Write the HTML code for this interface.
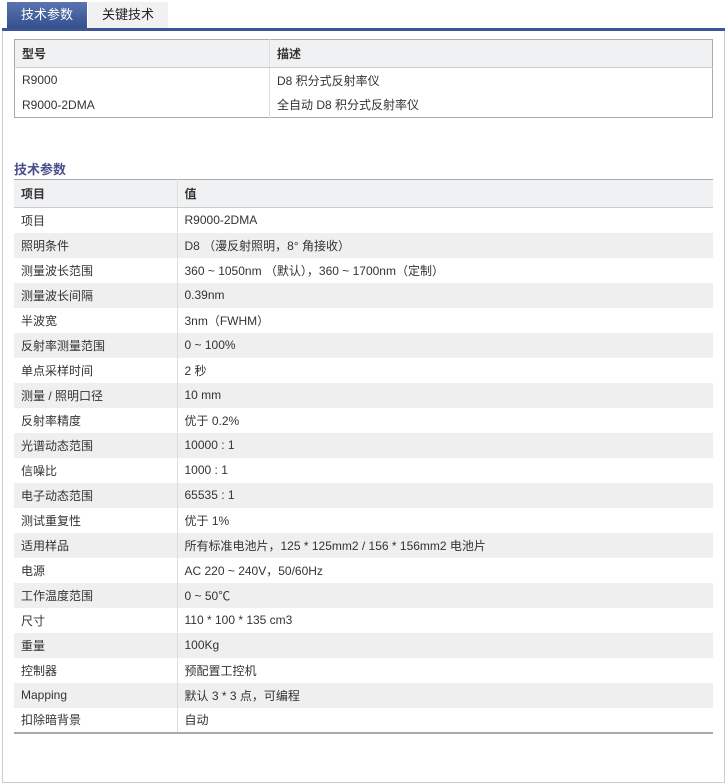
<!DOCTYPE html>
<html><head><meta charset="utf-8"><style>
*{margin:0;padding:0;box-sizing:border-box}
body{width:726px;height:784px;background:#fff;font-family:"Liberation Sans","Noto Sans CJK SC",sans-serif;font-size:12px;color:#333;position:relative;overflow:hidden}
.tab{position:absolute;top:2px;height:26px;width:80px;text-align:center;line-height:26px;font-size:13px}
.t1{left:7px;background:linear-gradient(#5b74b0,#34508f);color:#fff}
.t2{left:88px;background:#f1f1f1;color:#222}
.bar{position:absolute;left:2px;top:28px;width:723px;height:3px;background:#3b5595}
.box{position:absolute;left:2px;top:31px;width:723px;height:752px;border:1px solid #ccc;border-top:none}
table{border-collapse:collapse;position:absolute;left:14px;width:699px}
td{height:25px;padding-left:7px;vertical-align:middle}
.tb1{top:39px;border:1px solid #aaa}
.tb1 tr.h td{background:#f0f1f3;height:28px;border-bottom:1px solid #ccc;font-weight:bold}
.tb1 td.c1{width:255px;border-right:1px solid #ddd}
.tb2{top:179px;border-top:1px solid #aaa;border-bottom:2px solid #aaa}
.tb2 tr.h td{background:#f0f1f3;height:28px;border-bottom:1px solid #ccc;font-weight:bold}
.tb2 td.c1{width:163px;border-right:1px solid #ddd}
.tb2 tr.g td{background:#efefef}
.title{position:absolute;left:14px;top:159px;font-size:13px;font-weight:bold;color:#4c4f8f}
</style></head><body>
<div class="tab t1">技术参数</div><div class="tab t2">关键技术</div>
<div class="bar"></div><div class="box"></div>
<table class="tb1">
<tr class="h"><td class="c1">型号</td><td>描述</td></tr>
<tr><td class="c1">R9000</td><td>D8 积分式反射率仪</td></tr>
<tr><td class="c1">R9000-2DMA</td><td>全自动 D8 积分式反射率仪</td></tr>
</table>
<div class="title">技术参数</div>
<table class="tb2">
<tr class="h"><td class="c1">项目</td><td>值</td></tr>
<tr><td class="c1">项目</td><td>R9000-2DMA</td></tr>
<tr class="g"><td class="c1">照明条件</td><td>D8 （漫反射照明，8° 角接收）</td></tr>
<tr><td class="c1">测量波长范围</td><td>360 ~ 1050nm （默认），360 ~ 1700nm（定制）</td></tr>
<tr class="g"><td class="c1">测量波长间隔</td><td>0.39nm</td></tr>
<tr><td class="c1">半波宽</td><td>3nm（FWHM）</td></tr>
<tr class="g"><td class="c1">反射率测量范围</td><td>0 ~ 100%</td></tr>
<tr><td class="c1">单点采样时间</td><td>2 秒</td></tr>
<tr class="g"><td class="c1">测量 / 照明口径</td><td>10 mm</td></tr>
<tr><td class="c1">反射率精度</td><td>优于 0.2%</td></tr>
<tr class="g"><td class="c1">光谱动态范围</td><td>10000 : 1</td></tr>
<tr><td class="c1">信噪比</td><td>1000 : 1</td></tr>
<tr class="g"><td class="c1">电子动态范围</td><td>65535 : 1</td></tr>
<tr><td class="c1">测试重复性</td><td>优于 1%</td></tr>
<tr class="g"><td class="c1">适用样品</td><td>所有标准电池片，125 * 125mm2 / 156 * 156mm2 电池片</td></tr>
<tr><td class="c1">电源</td><td>AC 220 ~ 240V，50/60Hz</td></tr>
<tr class="g"><td class="c1">工作温度范围</td><td>0 ~ 50℃</td></tr>
<tr><td class="c1">尺寸</td><td>110 * 100 * 135 cm3</td></tr>
<tr class="g"><td class="c1">重量</td><td>100Kg</td></tr>
<tr><td class="c1">控制器</td><td>预配置工控机</td></tr>
<tr class="g"><td class="c1">Mapping</td><td>默认 3 * 3 点，可编程</td></tr>
<tr><td class="c1">扣除暗背景</td><td>自动</td></tr>
</table>
</body></html>
